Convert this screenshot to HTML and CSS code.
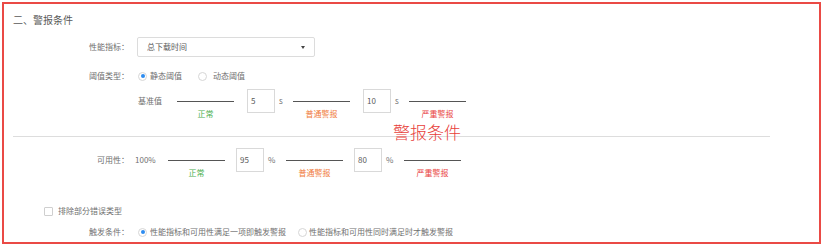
FILE: index.html
```html
<!DOCTYPE html>
<html lang="zh">
<head>
<meta charset="utf-8">
<link rel="stylesheet" href="styles.css">
</head>
<body>
<div class="frame">
  <div class="title">二、警报条件</div>

  <div class="row row-select">
    <div class="label">性能指标：</div>
    <div class="select">
      <span>总下载时间</span>
      <span class="caret"></span>
    </div>
  </div>

  <div class="row row-type">
    <div class="label">阈值类型：</div>
    <div class="radio on"></div><span class="opt">静态阈值</span>
    <div class="radio gap"></div><span class="opt">动态阈值</span>
  </div>

  <div class="row row-levels base">
    <span class="lead">基准值</span>
    <div class="seg first"><div class="line"></div><div class="lvl green">正常</div></div>
    <div class="input">5</div><span class="unit">s</span>
    <div class="seg"><div class="line"></div><div class="lvl orange">普通警报</div></div>
    <div class="input">10</div><span class="unit">s</span>
    <div class="seg"><div class="line"></div><div class="lvl red">严重警报</div></div>
  </div>

  <div class="divider-wrap">
    <div class="divider"></div>
    <div class="note">警报条件</div>
  </div>

  <div class="row row-levels avail">
    <div class="label">可用性：</div>
    <span class="lead pct">100%</span>
    <div class="seg first"><div class="line"></div><div class="lvl green">正常</div></div>
    <div class="input">95</div><span class="unit">%</span>
    <div class="seg"><div class="line"></div><div class="lvl orange">普通警报</div></div>
    <div class="input">80</div><span class="unit">%</span>
    <div class="seg"><div class="line"></div><div class="lvl red">严重警报</div></div>
  </div>

  <div class="row row-check">
    <div class="check"></div><span class="opt">排除部分错误类型</span>
  </div>

  <div class="row row-trigger">
    <div class="label">触发条件：</div>
    <div class="radio on"></div><span class="opt">性能指标和可用性满足一项即触发警报</span>
    <div class="radio gap2"></div><span class="opt">性能指标和可用性同时满足时才触发警报</span>
  </div>
</div>
</body>
</html>
```

FILE: styles.css
```css
* { box-sizing: border-box; }
html, body { margin: 0; padding: 0; background: #fff; }
body {
  font-family: "Noto Sans CJK SC", "Noto Sans", sans-serif;
  font-size: 8px;
  color: #707070;
}
.frame {
  margin: 2px 0 0 2px;
  width: 819px;
  height: 242px;
  border: 2px solid #ea4a45;
  padding: 0 0 0 9px;
}
.title {
  margin-top: 8px;
  font-size: 10px;
  line-height: 16px;
  color: #5a5a5a;
}
.row {
  display: flex;
  align-items: center;
  line-height: 14px;
}
.label {
  width: 118px;
  text-align: right;
  padding-right: 2px;
}
.row-select { margin-top: 9px; height: 20px; }
.select {
  margin-left: 6px;
  width: 178px;
  height: 20px;
  border: 1px solid #dcdcdc;
  border-radius: 2px;
  display: flex;
  align-items: center;
  justify-content: space-between;
  padding: 0 9px 0 9px;
  color: #5a5a5a;
}
.caret {
  width: 0; height: 0;
  border-left: 2.5px solid transparent;
  border-right: 2.5px solid transparent;
  border-top: 3px solid #444;
}
.row-type { margin-top: 12px; }
.radio {
  width: 9px; height: 9px;
  border-radius: 50%;
  border: 1px solid #d6d6d6;
  margin-left: 7px;
  margin-right: 3px;
  position: relative;
}
.radio.on::after {
  content: "";
  position: absolute;
  left: 1.5px; top: 1.5px;
  width: 4px; height: 4px;
  border-radius: 50%;
  background: #2d8cf0;
}
.radio.gap { margin-left: 16px; margin-right: 6px; }
.radio.gap2 { margin-left: 12px; margin-right: 2px; }
.opt { color: #707070; }

.row-levels { align-items: flex-start; }
.row-levels .lead, .row-levels .label, .row-levels .unit { line-height: 24px; }
.base { margin-top: 6px; padding-left: 125px; }
.avail { margin-top: 11px; }
.base .lead { width: 24px; }
.avail .lead { margin-left: 4px; width: 21px; }
.seg {
  width: 57px;
  margin-left: 10px;
  display: flex;
  flex-direction: column;
  align-items: center;
}
.avail .seg { margin-left: 12px; }
.seg.first { margin-left: 15px; }
.avail .seg.first { margin-left: 12px; }
.line {
  margin-top: 12px;
  width: 100%;
  height: 1px;
  background: #555;
}
.lvl { margin-top: 5px; line-height: 14px; }
.green { color: #4caf50; }
.orange { color: #f07a3a; }
.red { color: #e9443f; }
.input {
  width: 28px;
  height: 24px;
  margin-left: 13px;
  border: 1px solid #d9d9d9;
  padding-left: 3px;
  line-height: 22px;
  color: #5a5a5a;
}
.avail .input { margin-left: 11px; }
.unit { margin-left: 4px; width: 4px; }
.avail .unit { width: 6px; }

.divider-wrap {
  position: relative;
  margin-top: 15px;
}
.divider {
  width: 757px;
  height: 1px;
  background: #ddd;
}
.note {
  position: absolute;
  left: 380px;
  top: -14px;
  font-size: 17px;
  font-weight: 300;
  line-height: 20px;
  color: #e8403a;
}
.row-check { margin-top: 24px; padding-left: 31px; }
.check {
  width: 9px; height: 9px;
  border: 1px solid #cfcfcf;
  border-radius: 1px;
  margin-right: 5px;
}
.row-trigger { margin-top: 7px; }
```
